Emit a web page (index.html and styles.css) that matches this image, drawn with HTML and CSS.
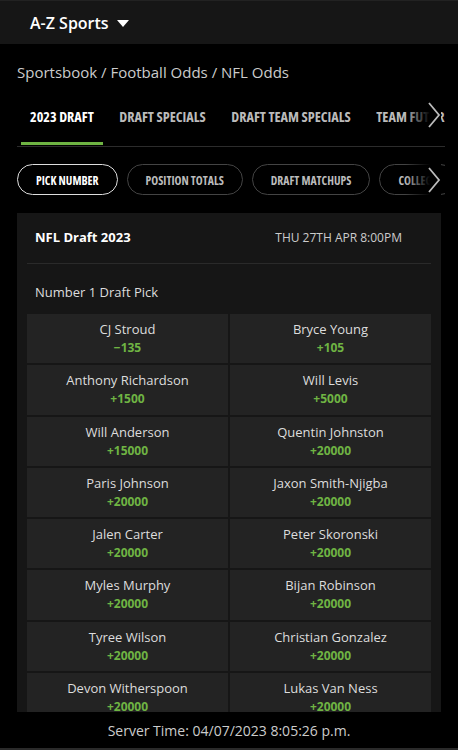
FILE: index.html
```html
<!DOCTYPE html>
<html lang="en">
<head>
    <meta charset="UTF-8">
    <meta name="viewport" content="width=device-width, initial-scale=1.0">
    <title>NFL Odds</title>
    <link rel="stylesheet" href="styles.css">
</head>
<body>
    <div class="topbar">
        <span class="topbar-title">A-Z Sports</span>
        <svg class="caret" width="12" height="7" viewBox="0 0 12 7"><path d="M0 0 L12 0 L6 7 Z" fill="#fff"/></svg>
    </div>

    <div class="crumbs">Sportsbook / Football Odds / NFL Odds</div>

    <div class="tabs-wrap">
        <div class="tabs">
            <div class="tab active">2023 DRAFT</div>
            <div class="tab">DRAFT SPECIALS</div>
            <div class="tab">DRAFT TEAM SPECIALS</div>
            <div class="tab">TEAM FUTURES</div>
        </div>
        <div class="fade">
            <svg width="14" height="26" viewBox="0 0 14 26"><path d="M2 1 L12 13 L2 25" fill="none" stroke="#bbb" stroke-width="1.8"/></svg>
        </div>
    </div>

    <div class="pills-wrap">
        <div class="pills">
            <div class="pill active">PICK NUMBER</div>
            <div class="pill">POSITION TOTALS</div>
            <div class="pill">DRAFT MATCHUPS</div>
            <div class="pill">COLLEGE</div>
        </div>
        <div class="fade">
            <svg width="14" height="26" viewBox="0 0 14 26"><path d="M2 1 L12 13 L2 25" fill="none" stroke="#bbb" stroke-width="1.8"/></svg>
        </div>
    </div>

    <div class="card">
        <div class="card-head">
            <span class="event">NFL Draft 2023</span>
            <span class="date">THU 27TH APR 8:00PM</span>
        </div>
        <div class="market">Number 1 Draft Pick</div>
        <div class="outcomes" id="outcomes"></div>
    </div>

    <div class="footer">Server Time: 04/07/2023 8:05:26 p.m.</div>

    <script>
        const picks = [
            ['CJ Stroud', '\u2212135'], ['Bryce Young', '+105'],
            ['Anthony Richardson', '+1500'], ['Will Levis', '+5000'],
            ['Will Anderson', '+15000'], ['Quentin Johnston', '+20000'],
            ['Paris Johnson', '+20000'], ['Jaxon Smith-Njigba', '+20000'],
            ['Jalen Carter', '+20000'], ['Peter Skoronski', '+20000'],
            ['Myles Murphy', '+20000'], ['Bijan Robinson', '+20000'],
            ['Tyree Wilson', '+20000'], ['Christian Gonzalez', '+20000'],
            ['Devon Witherspoon', '+20000'], ['Lukas Van Ness', '+20000']
        ];

        const grid = document.getElementById('outcomes');
        picks.forEach(function(p) {
            const cell = document.createElement('div');
            cell.className = 'outcome';
            cell.innerHTML = '<div class="name">' + p[0] + '</div><div class="odds">' + p[1] + '</div>';
            grid.appendChild(cell);
        });
    </script>
</body>
</html>
```

FILE: styles.css
```css
body {
    margin: 0;
    background-color: #000;
    color: #ddd;
    font-family: "Open Sans", "Liberation Sans", sans-serif;
}

.topbar {
    height: 44px;
    background-color: #161616;
    display: flex;
    align-items: center;
    padding-left: 30px;
    border-top: 1px solid #222;
    box-sizing: border-box;
}

.topbar-title {
    color: #fff;
    font-size: 16px;
    font-weight: 600;
}

.caret {
    margin-left: 8px;
    margin-top: 2px;
}

.crumbs {
    padding: 16px 0 0 17px;
    height: 40px;
    box-sizing: border-box;
    font-size: 15px;
    color: #ccc;
    line-height: 24px;
}

.tabs-wrap {
    position: relative;
    margin: 0 13px 0 17px;
    height: 62px;
    border-bottom: 1px solid #2c2c2c;
    overflow: hidden;
}

.tabs {
    display: flex;
    white-space: nowrap;
    padding-left: 4px;
}

.tab {
    font-family: "Open Sans", sans-serif;
    font-stretch: 75%;
    font-weight: 700;
    font-size: 14.2px;
    line-height: 19px;
    color: #bbb;
    padding: 23px 9px 0;
    height: 61px;
    box-sizing: border-box;
    margin-right: 7.5px;
}

.tab.active {
    color: #fff;
    border-bottom: 3px solid #6fb443;
}

.fade {
    position: absolute;
    right: 4px;
    top: 0;
    bottom: 0;
    width: 36px;
    display: flex;
    align-items: center;
    justify-content: flex-end;
    background: linear-gradient(to right, rgba(0, 0, 0, 0), #000 70%);
}

.pills-wrap {
    position: relative;
    margin: 17px 13px 0 17px;
    height: 31px;
    overflow: hidden;
}

.pills {
    display: flex;
    gap: 9px;
    white-space: nowrap;
}

.pill {
    font-family: "Open Sans", sans-serif;
    font-stretch: 75%;
    font-weight: 700;
    font-size: 11.7px;
    color: #bbb;
    border: 1px solid #444;
    border-radius: 16px;
    height: 31px;
    box-sizing: border-box;
    padding: 0 18px;
    display: flex;
    align-items: center;
}

.pill.active {
    color: #fff;
    border-color: #ddd;
}

.card {
    margin: 18px 17px 0;
    background-color: #161616;
    padding: 0 10px 60px;
}

.card-head {
    display: flex;
    justify-content: space-between;
    align-items: center;
    height: 51px;
    padding: 0 29px 2px 8px;
    box-sizing: border-box;
    border-bottom: 1px solid #2a2a2a;
}

.event {
    color: #fff;
    font-weight: 700;
    font-size: 13px;
}

.date {
    color: #ccc;
    font-size: 12px;
}

.market {
    padding-left: 8px;
    height: 50px;
    line-height: 56px;
    font-size: 13px;
    color: #ddd;
}

.outcomes {
    display: grid;
    grid-template-columns: 1fr 1fr;
    grid-auto-rows: 49.3px;
    gap: 2px;
}

.outcome {
    background-color: #232323;
    text-align: center;
    padding-top: 6px;
    box-sizing: border-box;
}

.name {
    font-size: 13px;
    line-height: 19px;
    color: #ddd;
}

.odds {
    font-size: 12px;
    line-height: 18px;
    font-weight: 700;
    color: #6fb443;
}

.footer {
    position: fixed;
    left: 0;
    right: 0;
    bottom: 0;
    height: 38px;
    background-color: #000;
    border-bottom: 2px solid #2a2a2a;
    box-sizing: border-box;
    text-align: center;
    line-height: 37px;
    font-size: 14px;
    color: #ccc;
}
```
